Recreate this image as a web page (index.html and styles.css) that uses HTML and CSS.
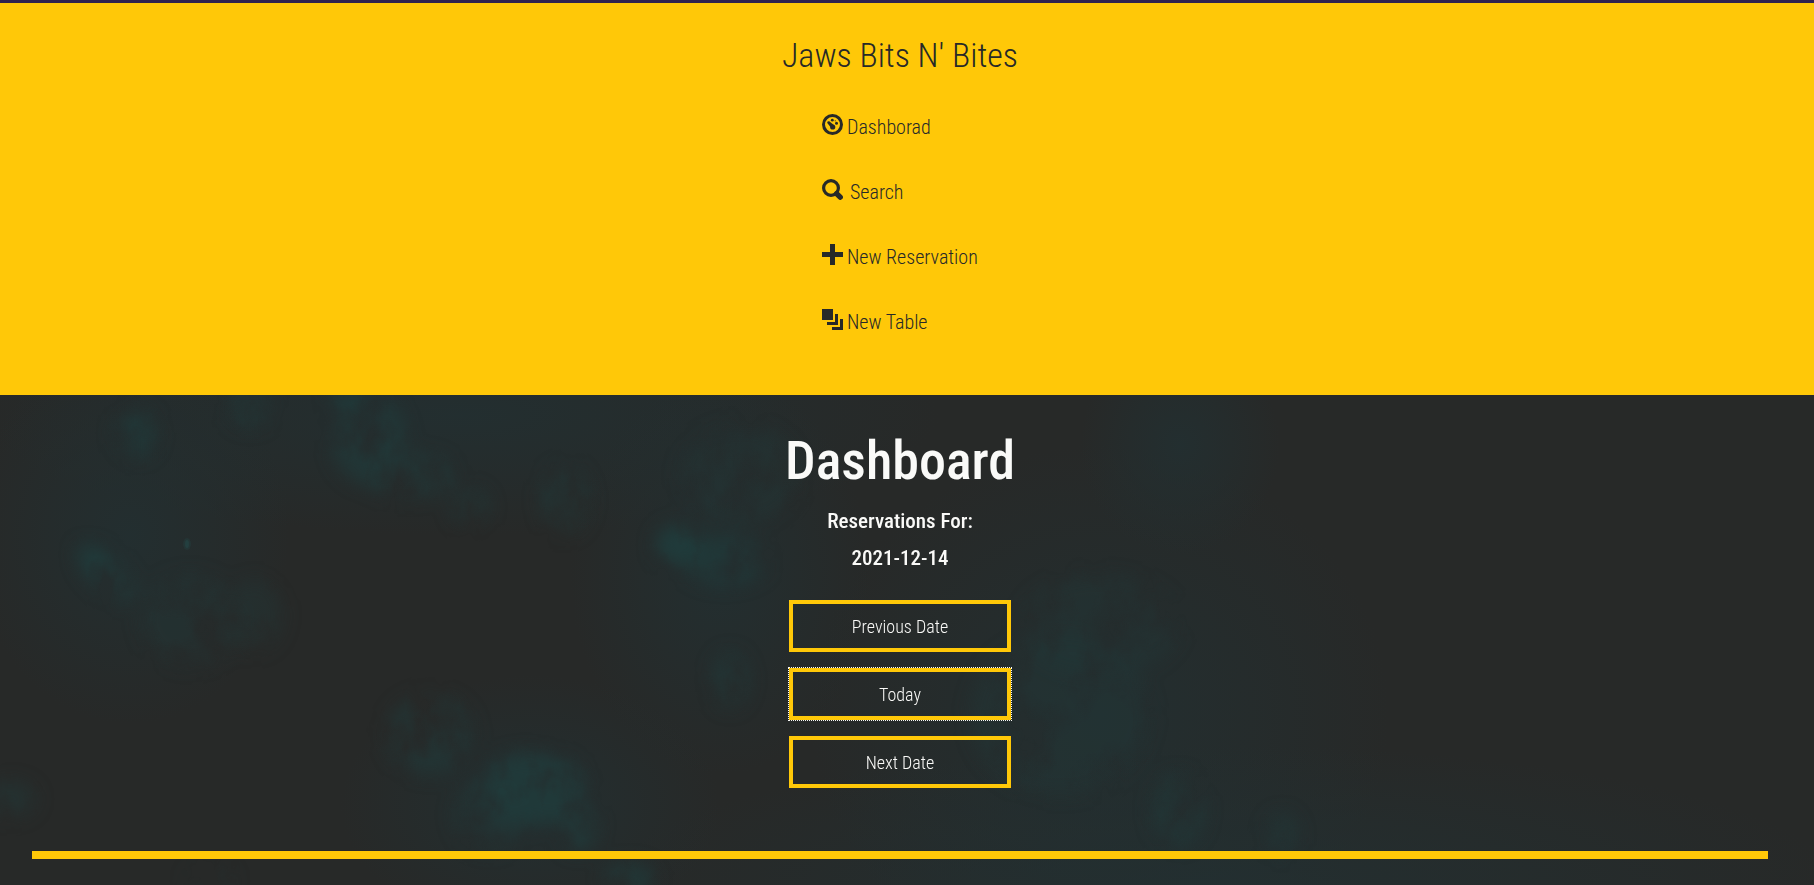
FILE: index.html
```html
<!DOCTYPE html>
<html lang="en">
<head>
<meta charset="utf-8">
<meta name="viewport" content="width=device-width, initial-scale=1">
<title>Jaws Bits N' Bites</title>
<link rel="stylesheet" href="styles.css">
</head>
<body>
<header class="site-header">
  <p class="brand">Jaws Bits N' Bites</p>
  <nav class="menu">
    <a class="menu-link" href="#dashboard">
      <svg class="icon" viewBox="0 0 21 21" aria-hidden="true"><circle cx="10.5" cy="10.5" r="9" fill="none" stroke="currentColor" stroke-width="3"/><g fill="currentColor"><circle cx="10.3" cy="6.2" r="1.4"/><circle cx="14.5" cy="9.3" r="1.5"/><circle cx="13.2" cy="6.8" r=".6"/><circle cx="10.7" cy="13" r="2.6"/><circle cx="6.6" cy="8.5" r="1.3"/><path d="m5.7 9.4 1.9-1.9 4.8 4-3 2.8Z"/></g></svg>
      <span>Dashborad</span>
    </a>
    <a class="menu-link" href="#search">
      <svg class="icon" viewBox="0 0 21 21" aria-hidden="true"><circle cx="9" cy="9" r="7.4" fill="none" stroke="currentColor" stroke-width="3.2"/><path d="m14.6 14.6 3.6 3.6" stroke="currentColor" stroke-width="5.4" stroke-linecap="round"/></svg>
      <span class="wide-gap">Search</span>
    </a>
    <a class="menu-link" href="#reservation">
      <svg class="icon" viewBox="0 0 21 21" aria-hidden="true"><path fill="currentColor" d="M8 0h5v8h8v5h-8v8H8v-8H0V8h8Z"/></svg>
      <span>New Reservation</span>
    </a>
    <a class="menu-link" href="#table">
      <svg class="icon" viewBox="0 0 21 21" aria-hidden="true"><path fill="currentColor" d="M0 0h11v11H0ZM13 5h3v11H5v-3h8ZM18 10h3v11H10v-3h8Z"/></svg>
      <span>New Table</span>
    </a>
  </nav>
</header>
<main class="dashboard" id="dashboard">
  <svg class="backdrop" viewBox="0 0 1814 490" preserveAspectRatio="none" aria-hidden="true">
    <defs>
      <filter id="smoke" x="-5%" y="-10%" width="110%" height="120%" color-interpolation-filters="sRGB">
        <feGaussianBlur in="SourceGraphic" stdDeviation="9" result="soft"/>
        <feTurbulence type="fractalNoise" baseFrequency="0.022 0.016" numOctaves="4" seed="8"/>
        <feColorMatrix values="0 0 0 0 0  0 0 0 0 0  0 0 0 0 0  3 0 0 0 -0.8" result="grain"/>
        <feComposite in="soft" in2="grain" operator="in"/>
      </filter>
      <radialGradient id="haze">
        <stop offset="0" stop-color="#223032" stop-opacity=".8"/>
        <stop offset=".5" stop-color="#223032" stop-opacity=".42"/>
        <stop offset="1" stop-color="#223032" stop-opacity="0"/>
      </radialGradient>
    </defs>
    <g fill="url(#haze)">
      <ellipse cx="460" cy="20" rx="480" ry="120"/>
      <ellipse cx="130" cy="140" rx="160" ry="190"/>
      <ellipse cx="720" cy="180" rx="150" ry="200"/>
      <ellipse cx="1100" cy="320" rx="290" ry="270"/>
      <ellipse cx="1180" cy="50" rx="100" ry="110"/>
      <ellipse cx="1220" cy="490" rx="620" ry="140"/>
      <ellipse cx="530" cy="410" rx="190" ry="130"/>
    </g>
    <g filter="url(#smoke)" fill="#203b3b">
      <ellipse cx="370" cy="45" rx="38" ry="44" opacity=".65"/>
      <ellipse cx="350" cy="8" rx="22" ry="18" opacity=".6"/>
      <ellipse cx="410" cy="80" rx="46" ry="22" opacity=".5"/>
      <ellipse cx="136" cy="38" rx="20" ry="24" opacity=".7"/>
      <ellipse cx="250" cy="12" rx="22" ry="20" opacity=".5"/>
      <ellipse cx="106" cy="178" rx="15" ry="36" transform="rotate(-45 106 178)"/>
      <ellipse cx="190" cy="225" rx="50" ry="46" opacity=".3"/>
      <ellipse cx="255" cy="220" rx="28" ry="36" opacity=".3"/>
      <ellipse cx="470" cy="112" rx="18" ry="18" opacity=".6"/>
      <ellipse cx="565" cy="105" rx="24" ry="34" opacity=".5"/>
      <ellipse cx="680" cy="150" rx="24" ry="20"/>
      <ellipse cx="725" cy="165" rx="42" ry="24" opacity=".7"/>
      <ellipse cx="740" cy="80" rx="60" ry="50" opacity=".3"/>
      <ellipse cx="730" cy="285" rx="18" ry="28" opacity=".5"/>
      <ellipse cx="430" cy="340" rx="44" ry="40" opacity=".5"/>
      <ellipse cx="530" cy="394" rx="56" ry="36" opacity=".9"/>
      <ellipse cx="578" cy="430" rx="18" ry="26" opacity=".8"/>
      <ellipse cx="490" cy="420" rx="36" ry="36" opacity=".4"/>
      <ellipse cx="1060" cy="320" rx="90" ry="80" opacity=".3"/>
      <ellipse cx="1100" cy="230" rx="80" ry="50" opacity=".3"/>
      <ellipse cx="1178" cy="415" rx="26" ry="36" opacity=".5"/>
      <ellipse cx="1282" cy="440" rx="16" ry="22" opacity=".4"/>
      <ellipse cx="630" cy="484" rx="26" ry="16" opacity=".7"/>
      <ellipse cx="210" cy="486" rx="22" ry="14" opacity=".5"/>
      <ellipse cx="10" cy="404" rx="26" ry="18" opacity=".4"/>
    </g>
    <ellipse cx="187" cy="149" rx="4" ry="6" fill="#23494a" opacity=".3"/>
    <ellipse cx="187" cy="149" rx="2" ry="4" fill="#23494a" opacity=".5"/>
  </svg>
  <h1 class="title">Dashboard</h1>
  <h2 class="subtitle">Reservations For:</h2>
  <h2 class="subtitle">2021-12-14</h2>
  <div class="actions">
    <button class="action" type="button">Previous Date</button>
    <button class="action action-current" type="button">Today</button>
    <button class="action" type="button">Next Date</button>
  </div>
  <hr class="divider">
</main>
</body>
</html>
```
FILE: styles.css
```css
* {
  box-sizing: border-box;
}

body {
  display: flex;
  flex-direction: column;
  min-height: 100vh;
  margin: 0;
  background: #272928;
  color: #272928;
  font-family: "Roboto Condensed", Roboto, sans-serif;
  font-weight: 300;
}

.site-header {
  display: flex;
  flex-direction: column;
  align-items: center;
  padding: 30px 14px 38px 0;
  border-top: 3px solid #30234f;
  background: #ffc808;
}

.brand {
  margin: 0 0 20px;
  font-size: 34px;
  line-height: 44px;
}

.menu {
  display: flex;
  flex-direction: column;
  width: 156px;
}

.menu-link {
  display: flex;
  align-items: center;
  gap: 4px;
  height: 60px;
  margin-bottom: 5px;
  color: inherit;
  font-size: 20px;
  line-height: 28px;
  text-decoration: none;
  white-space: nowrap;
}

.icon {
  flex: none;
  width: 21px;
  height: 21px;
  margin-bottom: 6px;
}

.wide-gap {
  margin-left: 3px;
}

.dashboard {
  position: relative;
  isolation: isolate;
  display: flex;
  flex: 1;
  flex-direction: column;
  align-items: center;
  padding: 32px 46px 26px 32px;
  overflow: hidden;
  color: #fafaf8;
}

.backdrop {
  position: absolute;
  inset: 0;
  z-index: -1;
  width: 100%;
  height: 100%;
}

.title {
  margin: 0 0 10px;
  font-size: 54px;
  font-weight: 500;
  line-height: 68px;
}

.subtitle {
  margin: 0 0 5px;
  font-size: 21px;
  font-weight: 500;
  line-height: 32px;
}

.actions {
  display: flex;
  flex-direction: column;
  gap: 16px;
  width: 222px;
  margin-top: 21px;
}

.action {
  height: 52px;
  border: 4px solid #ffc808;
  background: transparent;
  color: #fafaf8;
  font: inherit;
  font-size: 18px;
}

.action-current {
  outline: 1px dotted #fafaf8;
}

.divider {
  width: 100%;
  height: 8px;
  margin: 63px 0 0;
  border: 0;
  background: #ffc808;
}
```
